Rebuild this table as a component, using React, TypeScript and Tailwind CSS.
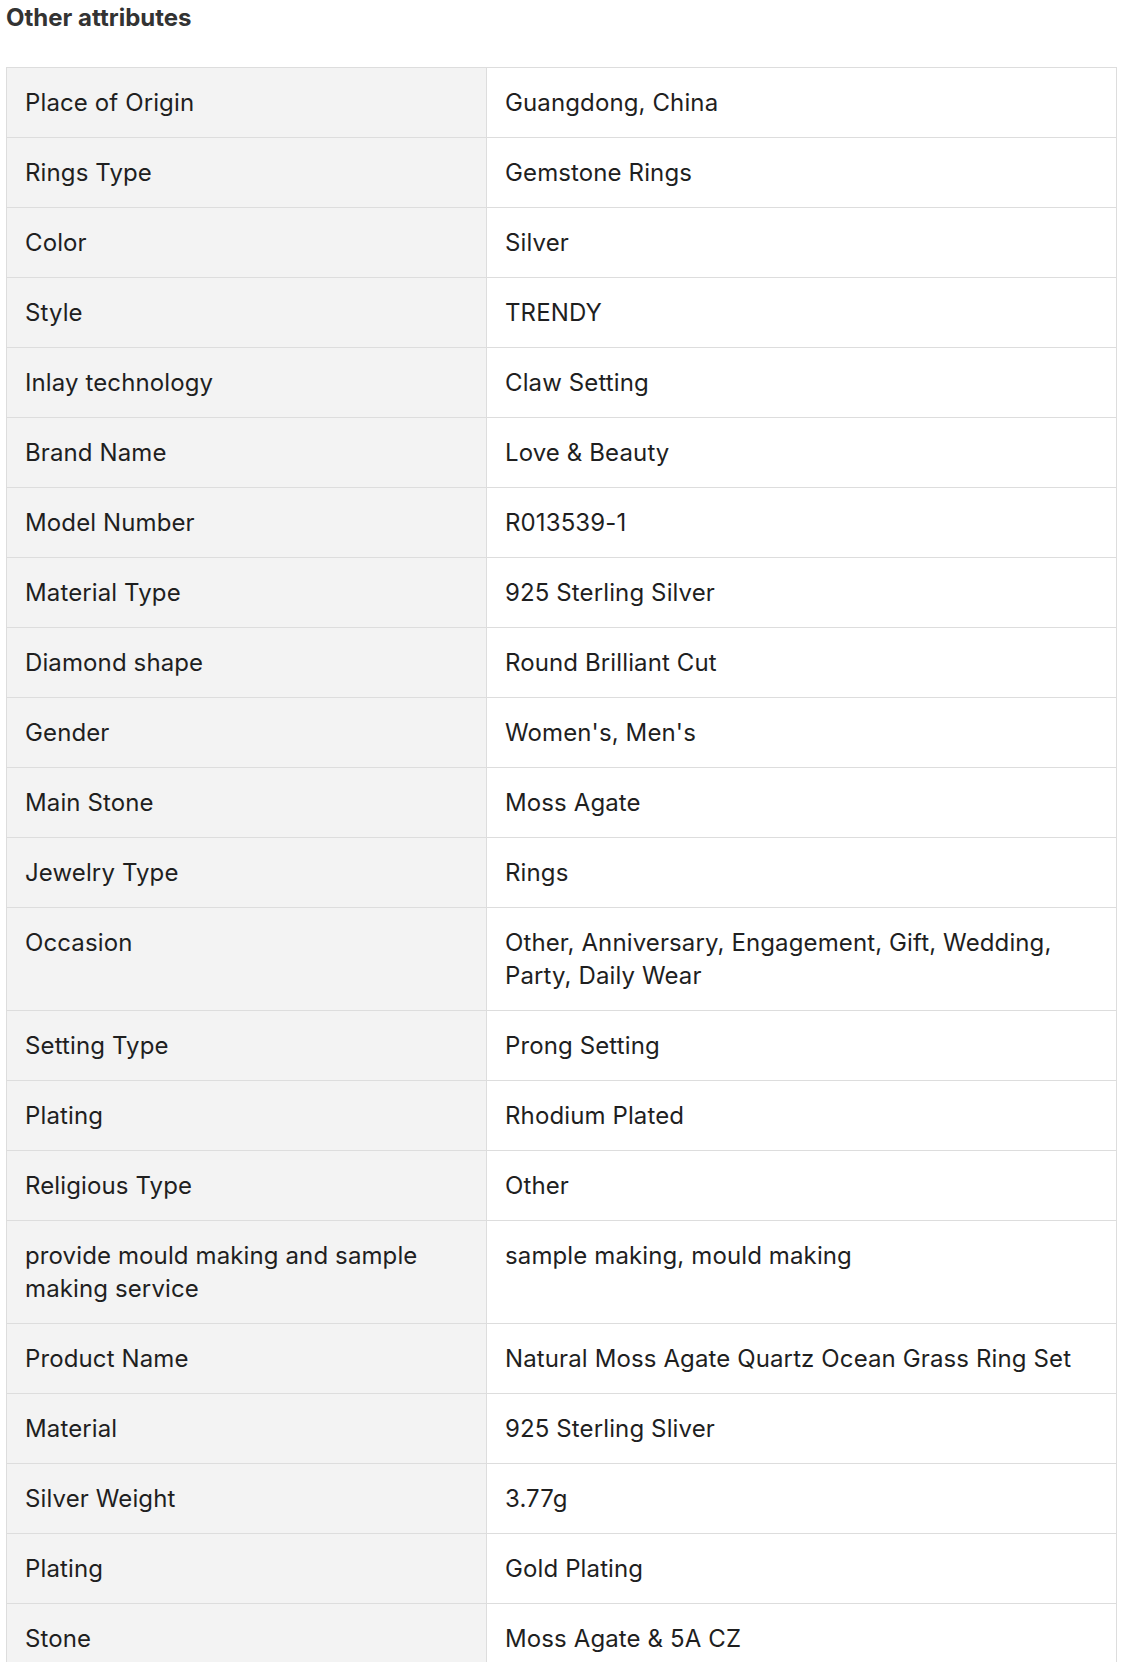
import React from "react";

const rows: [string, string][] = [
  ["Place of Origin", "Guangdong, China"],
  ["Rings Type", "Gemstone Rings"],
  ["Color", "Silver"],
  ["Style", "TRENDY"],
  ["Inlay technology", "Claw Setting"],
  ["Brand Name", "Love & Beauty"],
  ["Model Number", "R013539-1"],
  ["Material Type", "925 Sterling Silver"],
  ["Diamond shape", "Round Brilliant Cut"],
  ["Gender", "Women's, Men's"],
  ["Main Stone", "Moss Agate"],
  ["Jewelry Type", "Rings"],
  ["Occasion", "Other, Anniversary, Engagement, Gift, Wedding, Party, Daily Wear"],
  ["Setting Type", "Prong Setting"],
  ["Plating", "Rhodium Plated"],
  ["Religious Type", "Other"],
  ["provide mould making and sample making service", "sample making, mould making"],
  ["Product Name", "Natural Moss Agate Quartz Ocean Grass Ring Set"],
  ["Material", "925 Sterling Sliver"],
  ["Silver Weight", "3.77g"],
  ["Plating", "Gold Plating"],
  ["Stone", "Moss Agate & 5A CZ"],
];

export default function App() {
  return (
    <div
      className="bg-white pl-[6px] pr-[21px] text-[#1f1f1f]"
      style={{ fontFamily: "Inter, 'Noto Sans', sans-serif" }}
    >
      <h2 className="text-[24px] leading-[36px] font-bold text-[#333333]">
        Other attributes
      </h2>
      <table className="mt-[31px] w-[1111px] border-collapse table-fixed border border-[#dddddd]">
        <colgroup>
          <col className="w-[480px]" />
          <col />
        </colgroup>
        <tbody>
          {rows.map(([k, v], i) => (
            <tr key={i}>
              <td className="border border-[#dddddd] bg-[#f3f3f3] px-[18px] py-[18px] align-top text-[24px] leading-[33px] tracking-[0.12px]">
                {k}
              </td>
              <td className="border border-[#dddddd] bg-white px-[18px] py-[18px] align-top text-[24px] leading-[33px] tracking-[0.12px]">
                {v}
              </td>
            </tr>
          ))}
        </tbody>
      </table>
    </div>
  );
}
